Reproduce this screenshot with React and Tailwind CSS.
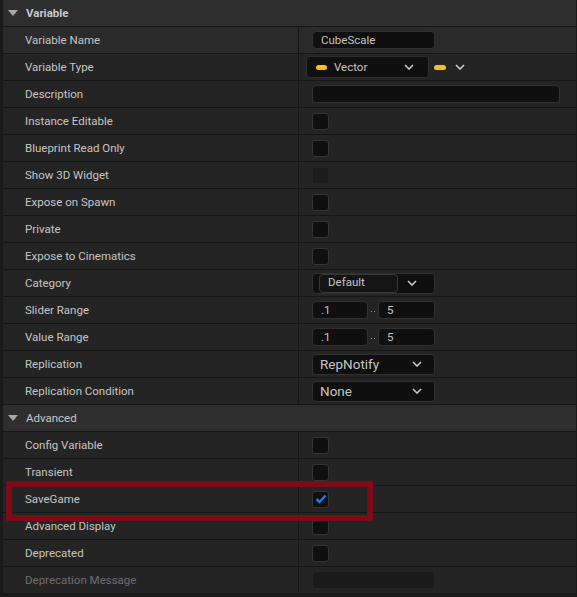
import React from 'react';

const font = { fontFamily: 'Roboto, "Noto Sans", sans-serif' };

const Chevron = ({ className = '' }) => (
  <svg width="10" height="6" viewBox="0 0 10 6" className={className}>
    <path d="M1 1 L5 5 L9 1" fill="none" stroke="#c8c8c8" strokeWidth="1.6" />
  </svg>
);

const Triangle = () => (
  <svg width="10" height="6" viewBox="0 0 10 6" className="mr-[8px]">
    <path d="M0 0 L10 0 L5 6 Z" fill="#a8a8a8" />
  </svg>
);

const Checkbox = ({ checked, disabled }) => (
  <div
    className={`w-[17px] h-[17px] rounded-[3px] border flex items-center justify-center ${
      disabled ? 'bg-[#1c1c1c] border-[#242424]' : 'bg-[#0f0f0f] border-[#353535]'
    }`}
  >
    {checked && (
      <svg width="12" height="10" viewBox="0 0 12 10">
        <path d="M1.5 5 L4.5 8 L10.5 1.5" fill="none" stroke="#1a7ff0" strokeWidth="2.4" />
      </svg>
    )}
  </div>
);

const TextBox = ({ value = '', w = 'w-[123px]', disabled }) => (
  <div
    className={`${w} h-[18px] rounded-[4px] border flex items-center pl-[8px] pt-px text-[11.5px] text-[#c4c4c4] ${
      disabled ? 'bg-[#1a1a1a] border-[#262626]' : 'bg-[#0f0f0f] border-[#303030]'
    }`}
  >
    {value}
  </div>
);

const Combo = ({ label }) => (
  <div className="w-[123px] h-[21px] rounded-[4px] border border-[#303030] bg-[#0f0f0f] flex items-center justify-between pl-[7px] pr-[12px] text-[13.5px] text-[#c4c4c4]">
    <span>{label}</span>
    <Chevron />
  </div>
);

const Range = () => (
  <div className="flex items-center">
    <div className="w-[56px] h-[18px] rounded-[4px] border border-[#303030] bg-[#0f0f0f] flex items-center pl-[8px] pt-px text-[11.5px] text-[#c4c4c4]">.1</div>
    <div className="w-[10px] flex justify-center gap-[2px] pt-[3px]">
      <div className="w-px h-px bg-[#8a8a8a]" />
      <div className="w-px h-px bg-[#8a8a8a]" />
    </div>
    <div className="w-[57px] h-[18px] rounded-[4px] border border-[#303030] bg-[#0f0f0f] flex items-center pl-[8px] pt-px text-[11.5px] text-[#c4c4c4]">5</div>
  </div>
);

const Row = ({ label, children, dim, hover, pl = 'pl-[13px]' }) => (
  <div className={`h-[27px] flex border-b border-[#161616] ${hover ? 'bg-[#2a2a2a]' : 'bg-[#242424]'}`}>
    <div className={`w-[295px] flex items-center pl-[22px] pt-[2px] text-[11.5px] ${dim ? 'text-[#6c6c6c]' : 'text-[#c4c4c4]'}`}>
      {label}
    </div>
    <div className="w-px bg-[#161616]" />
    <div className={`flex-1 flex items-center ${pl}`}>{children}</div>
  </div>
);

const Header = ({ label, bold }) => (
  <div className="h-[27px] flex items-center border-b border-[#161616] bg-[#2e2e2e] pl-[5px]">
    <Triangle />
    <span className={`text-[11.5px] pt-[2px] text-[#c8c8c8] ${bold ? 'font-bold' : ''}`}>{label}</span>
  </div>
);

export default function App() {
  return (
    <div className="w-[577px] h-[597px] bg-[#1a1a1a] relative overflow-hidden" style={font}>
      <div className="ml-[3px] mr-px">
        <Header label="Variable" bold />
        <Row label="Variable Name" hover>
          <TextBox value="CubeScale" />
        </Row>
        <Row label="Variable Type" pl="pl-[7px]">
          <div className="flex items-center">
            <div className="w-[123px] h-[22px] rounded-[4px] border border-[#2e2e2e] bg-[#0f0f0f] flex items-center justify-between pl-[9px] pr-[14px]">
              <div className="flex items-center">
                <div className="w-[11px] h-[5px] rounded-full bg-[#f5c21a] mr-[7px]" />
                <span className="text-[11.5px] pt-px text-[#c4c4c4]">Vector</span>
              </div>
              <Chevron />
            </div>
            <div className="w-[12px] h-[5px] rounded-full bg-[#f5c21a] ml-[5px] mr-[9px]" />
            <Chevron />
          </div>
        </Row>
        <Row label="Description">
          <TextBox w="w-[248px]" />
        </Row>
        <Row label="Instance Editable"><Checkbox /></Row>
        <Row label="Blueprint Read Only"><Checkbox /></Row>
        <Row label="Show 3D Widget"><Checkbox disabled /></Row>
        <Row label="Expose on Spawn"><Checkbox /></Row>
        <Row label="Private"><Checkbox /></Row>
        <Row label="Expose to Cinematics"><Checkbox /></Row>
        <Row label="Category">
          <div className="w-[123px] h-[21px] rounded-[4px] border border-[#303030] bg-[#0f0f0f] flex items-center justify-between pl-[6px] pr-[17px]">
            <div className="w-[79px] h-[19px] rounded-[4px] border border-[#383838] bg-[#141414] flex items-center pl-[8px] text-[11.5px] text-[#c4c4c4]">
              Default
            </div>
            <Chevron />
          </div>
        </Row>
        <Row label="Slider Range"><Range /></Row>
        <Row label="Value Range"><Range /></Row>
        <Row label="Replication"><Combo label="RepNotify" /></Row>
        <Row label="Replication Condition"><Combo label="None" /></Row>
        <Header label="Advanced" />
        <Row label="Config Variable"><Checkbox /></Row>
        <Row label="Transient"><Checkbox /></Row>
        <Row label="SaveGame"><Checkbox checked /></Row>
        <Row label="Advanced Display"><Checkbox /></Row>
        <Row label="Deprecated"><Checkbox /></Row>
        <Row label="Deprecation Message" dim>
          <TextBox disabled />
        </Row>
      </div>
      <div className="absolute left-[6px] top-[481px] w-[367px] h-[40px] border-[6px] border-[#7d0a18]" />
    </div>
  );
}
